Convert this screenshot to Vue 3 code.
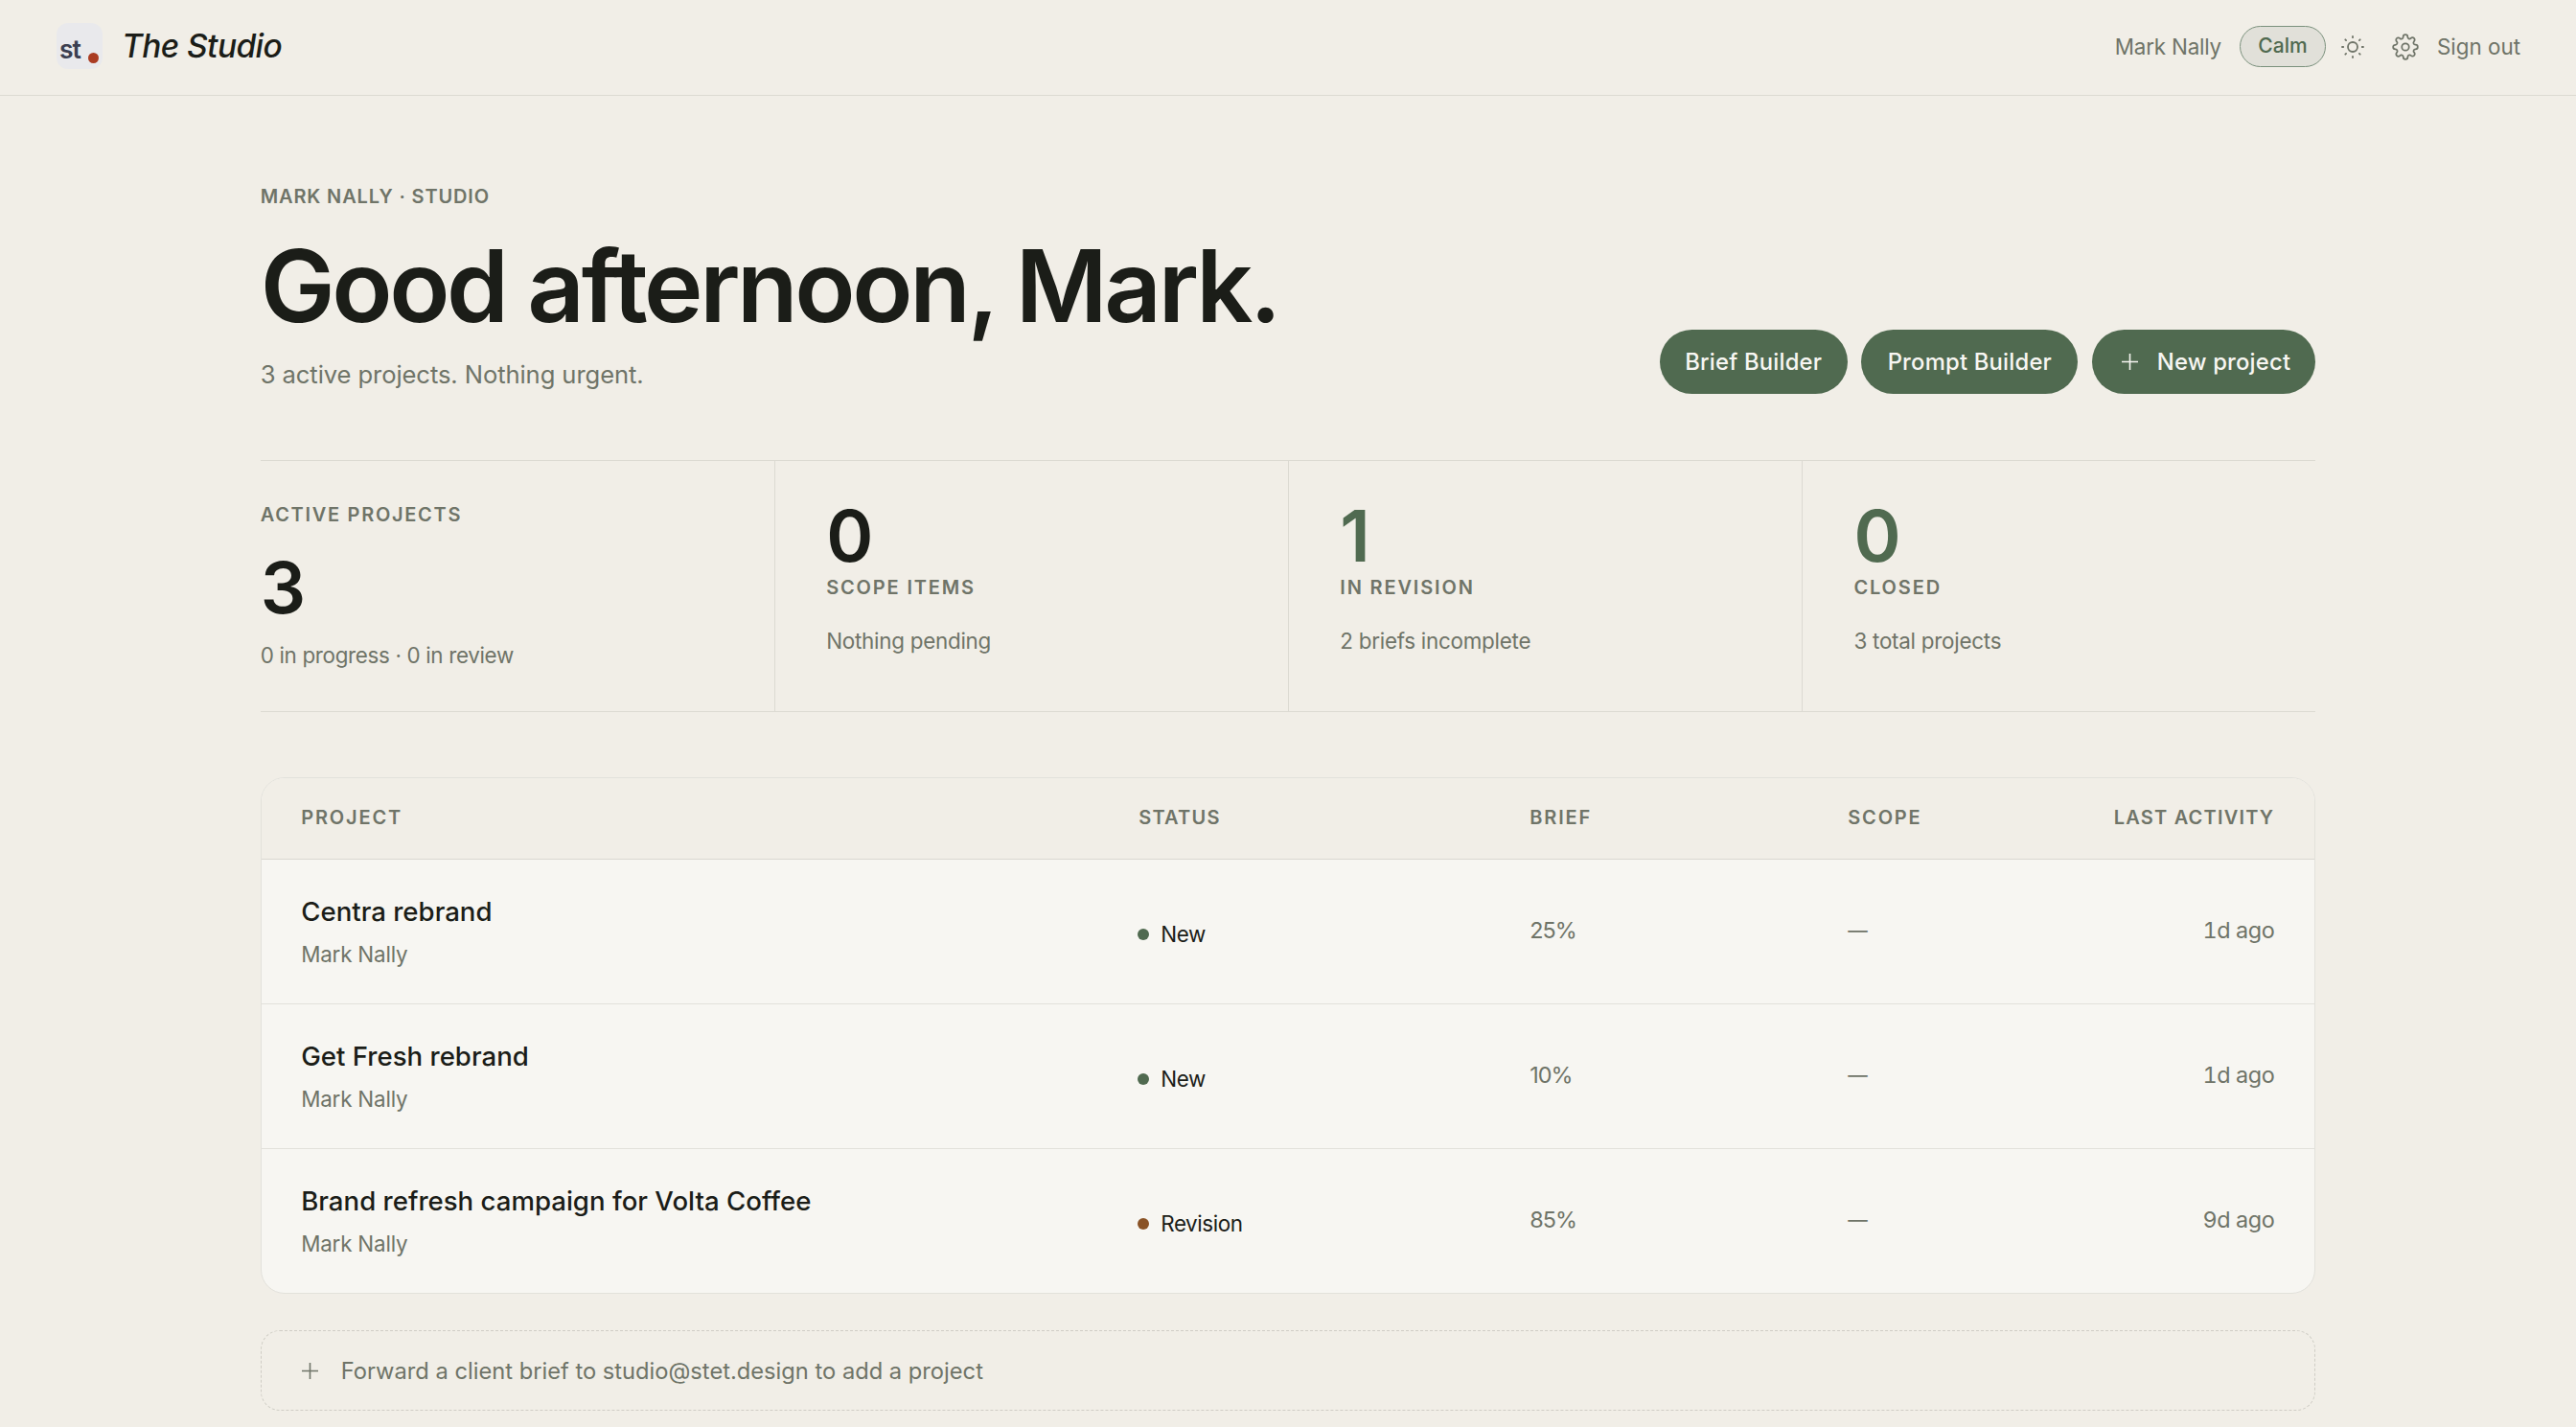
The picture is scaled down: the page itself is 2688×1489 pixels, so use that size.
<script setup>
const stats = [
  { value: '3', label: 'Active projects', note: '0 in progress · 0 in review', lead: true },
  { value: '0', label: 'Scope items', note: 'Nothing pending' },
  { value: '1', label: 'In revision', note: '2 briefs incomplete', accent: true },
  { value: '0', label: 'Closed', note: '3 total projects', accent: true },
]
const projects = [
  { name: 'Centra rebrand', client: 'Mark Nally', status: 'New', brief: '25%', scope: '—', last: '1d ago' },
  { name: 'Get Fresh rebrand', client: 'Mark Nally', status: 'New', brief: '10%', scope: '—', last: '1d ago' },
  { name: 'Brand refresh campaign for Volta Coffee', client: 'Mark Nally', status: 'Revision', brief: '85%', scope: '—', last: '9d ago' },
]
</script>

<template>
  <div class="page">
    <header class="topbar">
      <div class="brand">
        <div class="mark"><span class="mark-text">st</span><i class="mark-dot"></i></div>
        <span class="brand-name">The Studio</span>
      </div>
      <nav class="tools">
        <span class="user">Mark Nally</span>
        <button class="mode"><span>Calm</span></button>
        <svg class="sun" viewBox="0 0 24 24" fill="none" stroke="currentColor" stroke-width="1.8" stroke-linecap="round">
          <circle cx="12" cy="12" r="5" />
          <path d="M12 1v1.2M12 21.8v1.2M1 12h1.2M21.8 12h1.2M4.3 4.3l.8.8M18.9 18.9l.8.8M4.3 19.7l.8-.8M18.9 5.1l.8-.8" />
        </svg>
        <svg class="gear" viewBox="0 0 24 24" fill="none" stroke="currentColor" stroke-width="1.5" stroke-linejoin="round" stroke-linecap="round">
          <circle cx="12" cy="12" r="3.2" />
          <path d="M19.4 15a1.65 1.65 0 0 0 .33 1.82l.06.06a2 2 0 0 1 0 2.83 2 2 0 0 1-2.83 0l-.06-.06a1.65 1.65 0 0 0-1.82-.33 1.65 1.65 0 0 0-1 1.51V21a2 2 0 0 1-2 2 2 2 0 0 1-2-2v-.09A1.65 1.65 0 0 0 9 19.4a1.65 1.65 0 0 0-1.82.33l-.06.06a2 2 0 0 1-2.83 0 2 2 0 0 1 0-2.83l.06-.06a1.65 1.65 0 0 0 .33-1.82 1.65 1.65 0 0 0-1.51-1H3a2 2 0 0 1-2-2 2 2 0 0 1 2-2h.09A1.65 1.65 0 0 0 4.6 9a1.65 1.65 0 0 0-.33-1.82l-.06-.06a2 2 0 0 1 0-2.83 2 2 0 0 1 2.83 0l.06.06a1.65 1.65 0 0 0 1.82.33H9a1.65 1.65 0 0 0 1-1.51V3a2 2 0 0 1 2-2 2 2 0 0 1 2 2v.09a1.65 1.65 0 0 0 1 1.51 1.65 1.65 0 0 0 1.82-.33l.06-.06a2 2 0 0 1 2.83 0 2 2 0 0 1 0 2.83l-.06.06a1.65 1.65 0 0 0-.33 1.82V9a1.65 1.65 0 0 0 1.51 1H21a2 2 0 0 1 2 2 2 2 0 0 1-2 2h-.09a1.65 1.65 0 0 0-1.51 1z" />
        </svg>
        <span class="signout">Sign out</span>
      </nav>
    </header>

    <main class="content">
      <section class="hero">
        <div>
          <div class="eyebrow">Mark Nally · Studio</div>
          <h1 class="title">Good afternoon, Mark.</h1>
          <p class="subtitle">3 active projects. Nothing urgent.</p>
        </div>
        <div class="actions">
          <button class="btn b1"><span>Brief Builder</span></button>
          <button class="btn b2"><span>Prompt Builder</span></button>
          <button class="btn b3">
            <svg class="plus" viewBox="0 0 17 17"><path d="M8.5 0v17M0 8.5h17" /></svg>
            <span>New project</span>
          </button>
        </div>
      </section>

      <section class="stats">
        <div v-for="s in stats" :key="s.label" class="stat" :class="{ lead: s.lead, accent: s.accent }">
          <div class="label">{{ s.label }}</div>
          <div class="value">{{ s.value }}</div>
          <div class="note">{{ s.note }}</div>
        </div>
      </section>

      <section class="table">
        <div class="row head">
          <span>Project</span><span class="snug">Status</span><span>Brief</span><span>Scope</span><span class="right snug">Last activity</span>
        </div>
        <div v-for="p in projects" :key="p.name" class="row item">
          <div>
            <div class="name">{{ p.name }}</div>
            <div class="client">{{ p.client }}</div>
          </div>
          <div class="status"><i class="dot" :class="p.status.toLowerCase()"></i><span>{{ p.status }}</span></div>
          <span class="cell brief">{{ p.brief }}</span>
          <span class="cell scope">{{ p.scope }}</span>
          <span class="cell right last">{{ p.last }}</span>
        </div>
      </section>

      <section class="forward">
        <svg class="plus" viewBox="0 0 17 17"><path d="M8.5 0v17M0 8.5h17" /></svg>
        <span>Forward a client brief to studio@stet.design to add a project</span>
      </section>
    </main>
  </div>
</template>

<style>
body { margin: 0; background: #f1eee7; }
</style>

<style scoped>
.page {
  width: 2688px; height: 1489px; overflow: hidden; background: #f1eee7; color: #1b1d18;
  font-family: Inter, "Liberation Sans", sans-serif; box-sizing: border-box;
}
.page * { box-sizing: border-box; }
button { font: inherit; border: 0; margin: 0; padding: 0; color: inherit; }
.topbar { height: 100px; border-bottom: 1px solid #dcdad2; display: flex; justify-content: space-between; align-items: center; padding: 0 58px 2px 59px; }
.brand { display: flex; align-items: center; gap: 20px; height: 48px; margin-bottom: 1px; }
.mark { width: 48px; height: 48px; border-radius: 12px; background: #e9e9ec; display: flex; align-items: flex-end; padding: 0 4px 6px 3px; justify-content: space-between; }
.mark-text { font-size: 26.5px; line-height: 30px; font-weight: 600; color: #3c3f50; letter-spacing: -1px; }
.mark-dot { width: 11px; height: 11px; border-radius: 50%; background: #aa3c22; }
.brand-name { font-size: 33.5px; line-height: 40px; font-weight: 500; font-style: italic; letter-spacing: -0.6px; }
.tools { display: flex; align-items: center; color: #6f7468; font-size: 22.4px; line-height: 30px; }
.user { letter-spacing: -0.2px; }
.mode { height: 43px; width: 90px; border: 1.5px solid #7b917d; border-radius: 22px; background: #e1e0d9; color: #506a50; font-size: 21px; font-weight: 500; line-height: 26px; margin: 0 16px 0 19px; padding-bottom: 1px; }
.sun { width: 24px; height: 24px; }
.gear { width: 28px; height: 28px; margin: 0 19px 0 29px; overflow: visible; }
.content { width: 2144.6px; margin: 0 auto; padding-top: 93px; }
.hero { display: flex; justify-content: space-between; align-items: flex-end; height: 218px; }
.hero > div:first-child { align-self: flex-start; }
.eyebrow, .label, .head { text-transform: uppercase; font-weight: 600; font-size: 20px; line-height: 24px; color: #6f7468; }
.eyebrow { letter-spacing: 0.85px; }
.label, .head { letter-spacing: 1.85px; }
.title { margin: 27px 0 0; font-size: 104px; line-height: 108px; font-weight: 600; white-space: nowrap; letter-spacing: -3.4px; }
.subtitle { margin: 22px 0 0; font-size: 25.6px; line-height: 34px; color: #6f7468; letter-spacing: -0.09px; }
.actions { display: flex; gap: 14.4px; }
.btn { height: 67px; border-radius: 34px; background: #506a50; color: #f7f6f2; font-size: 23.8px; font-weight: 500; letter-spacing: 0.2px; display: flex; align-items: center; justify-content: center; white-space: nowrap; }
.b1 { width: 196.4px; }
.b2 { width: 226px; }
.b3 { width: 233.6px; gap: 20px; justify-content: flex-start; padding-left: 31px; }
.plus { width: 17px; height: 17px; stroke: currentColor; stroke-width: 1.6; fill: none; }
.stats { margin-top: 69px; height: 263px; border-top: 1px solid #dcdad2; border-bottom: 1px solid #dcdad2; display: grid; grid-template-columns: repeat(4, 1fr); }
.stat { display: flex; flex-direction: column; padding: 41px 0 0 53.3px; border-left: 1px solid #dcdad2; }
.stat.lead { padding: 43.6px 0 0; border-left: 0; }
.value { font-size: 74.5px; line-height: 74px; font-weight: 600; order: -1; }
.label { margin-top: 5px; }
.note { font-size: 22.4px; line-height: 32px; color: #6f7468; margin-top: 28px; letter-spacing: -0.25px; }
.lead .label { order: -2; margin: 0 0 27px; letter-spacing: 1.7px; }
.lead .note { margin-top: 18px; letter-spacing: -0.33px; }
.accent .value { color: #506a50; }
.table { margin-top: 68px; border: 1px solid #e2e1db; border-radius: 25px; overflow: hidden; background: #f7f6f2; }
.row { display: grid; grid-template-columns: 874px 408px 332px 1fr auto; align-items: center; padding: 0 42px 0 41.5px; }
.head { height: 85px; border-bottom: 1px solid #dad8d1; background: #f1eee7; padding-bottom: 2px; }
.snug { letter-spacing: 1.2px; }
.item { height: 151px; border-bottom: 1px solid #e2e1db; }
.item:last-child { height: 150px; border: 0; }
.right { text-align: right; }
.name { font-size: 27.6px; line-height: 36px; font-weight: 500; }
.client { font-size: 22.4px; line-height: 30px; color: #6f7468; margin-top: 12px; letter-spacing: -0.2px; }
.status { display: flex; align-items: center; gap: 12px; font-size: 22.4px; line-height: 30px; padding-top: 5px; letter-spacing: -0.4px; }
.dot { width: 12px; height: 12px; border-radius: 50%; background: #506a50; margin-left: -1px; }
.dot.revision { background: #8a5326; }
.cell { font-size: 23.4px; line-height: 30px; color: #6f7468; padding-bottom: 3px; }
.brief { letter-spacing: -1px; }
.scope { font-size: 20.5px; padding-bottom: 2px; }
.last { letter-spacing: -0.4px; font-variant-numeric: tabular-nums; }
.forward { margin-top: 38px; height: 84px; border: 1px dashed #cfcdc5; border-radius: 20px; display: flex; align-items: center; padding-left: 42.5px; gap: 23.5px; font-size: 23.7px; color: #6f7468; }
</style>
